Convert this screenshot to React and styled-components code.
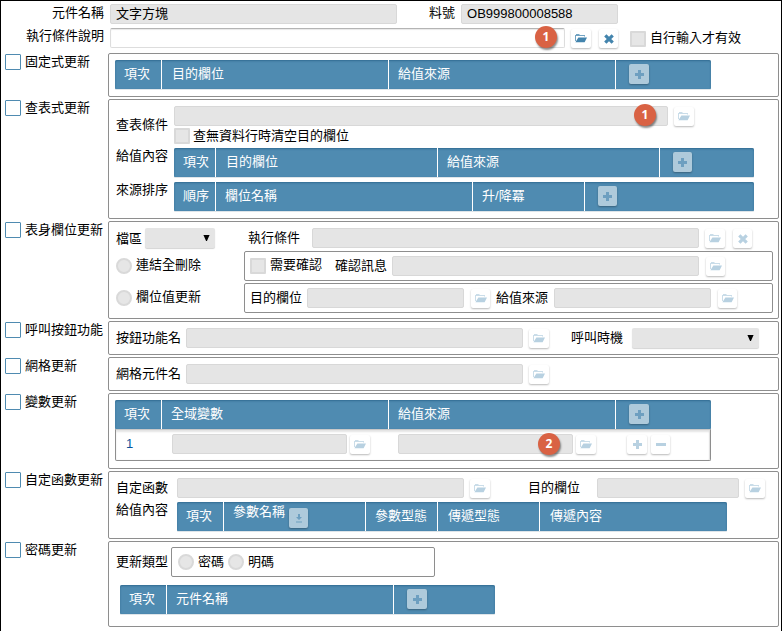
import React from "react";
import styled, { createGlobalStyle, css } from "styled-components";

const BLUE = "#4f8bb1";

const GlobalStyle = createGlobalStyle`
  * { box-sizing: border-box; }
  body { margin: 0; background: #fff; overflow: hidden; }
`;

const place = css`
  flex: none;
  margin-left: ${(p) => p.$ml || 0}px;
  margin-top: ${(p) => p.$mt || 0}px;
`;

const Page = styled.div`
  width: 782px;
  height: 631px;
  border: 1px solid #000;
  border-bottom: 0;
  color: #000;
  font: 13px/20px "Liberation Sans", "Noto Sans CJK TC", sans-serif;
  overflow: hidden;
`;

const Top = styled.div`
  height: 52px;
  padding-top: 3px;
`;

const Row = styled.div`
  display: flex;
  align-items: flex-start;
  height: ${(p) => p.$h}px;
  ${place}
`;

const Sections = styled.div`
  display: flex;
  flex-direction: column;
  gap: 2px;
`;

const Section = styled.section`
  display: grid;
  grid-template-columns: 103px 671px;
  padding-left: 4px;
`;

const SectionTitle = styled.label`
  display: flex;
  gap: 4px;
  height: 20px;
  padding-top: 1px;
  line-height: 16px;
  white-space: nowrap;
`;

const Panel = styled.div`
  height: ${(p) => p.$h}px;
  border: 1px solid #8e8e8e;
  border-radius: 2px;
`;

const Text = styled.span`
  ${place}
  height: 20px;
  line-height: 20px;
  white-space: nowrap;
`;

const Check = styled.span`
  ${place}
  width: 16px;
  height: 16px;
  border-radius: 1px;
  border: ${(p) => (p.$active ? `1px solid ${BLUE}` : "2px solid #d9d9d9")};
  background: ${(p) => (p.$active ? "#fff" : "#e6e6e6")};
`;

const Radio = styled(Check)`
  border-radius: 50%;
`;

const Field = styled.div`
  ${place}
  position: relative;
  width: ${(p) => p.$w}px;
  height: 20px;
  padding-left: 5px;
  line-height: 18px;
  border: 1px solid #d8d8d8;
  border-radius: 2px;
  background: #e5e5e5;
  ${(p) =>
    p.$open &&
    css`
      background: #fff;
      border-color: #b4b4b4 #ddd #ddd;
      box-shadow: inset 0 1px 1px #e8e8e8;
    `}
`;

const SelectBox = styled.div`
  ${place}
  display: flex;
  align-items: center;
  justify-content: flex-end;
  width: ${(p) => p.$w}px;
  height: 20px;
  padding: 0 5px 1px 0;
  border-radius: 2px;
  background: #e5e5e5;
  box-shadow: 0 1px 1px #d4d4d4;
`;

const Badge = styled.span`
  position: absolute;
  right: ${(p) => p.$right}px;
  top: ${(p) => p.$top}px;
  width: 22px;
  height: 22px;
  border-radius: 50%;
  background: #d96244;
  color: #fff;
  font: bold 12px/22px "Open Sans", sans-serif;
  text-align: center;
  box-shadow: 1px 2px 2px rgba(0, 0, 0, 0.45);
`;

const Button = styled.span`
  ${place}
  display: flex;
  align-items: center;
  justify-content: center;
  width: ${(p) => p.$w || 20}px;
  height: 19px;
  border-radius: 2px;
  background: #fff;
  color: ${(p) => (p.$active ? "#4384ad" : "#b8d1e1")};
  box-shadow: 0 1px 2px rgba(0, 0, 0, 0.28);
`;

const HeadButton = styled(Button)`
  height: 20px;
  background: #aecadb;
  color: #6d9fc0;
  box-shadow: 0 1px 2px rgba(0, 0, 0, 0.3);
`;

const TableHead = styled.div`
  ${place}
  display: flex;
  width: ${(p) => p.$w}px;
  height: 29px;
  border-radius: 2px 2px 1px 1px;
  background: ${BLUE};
  color: #fff;
  box-shadow: inset 0 1px 2px #326c91, 0 1px 0 #dfe5e9;
`;

const Cell = styled.div`
  display: flex;
  flex: none;
  width: ${(p) => p.$w}px;
  padding: 4px 0 0 ${(p) => p.$pl}px;
  border-right: 1px solid #fff;
  &:last-child { border-right: 0; }
`;

const Group = styled.div`
  ${place}
  display: flex;
  width: ${(p) => p.$w}px;
  height: 30px;
  border: 1px solid #8e8e8e;
  border-radius: 2px;
`;

const Record = styled.div`
  display: flex;
  width: 596px;
  height: 32px;
  margin-left: 6px;
  border: 1px solid #8e8e8e;
  border-top: 1px solid #c9c9c9;
  border-radius: 0 0 2px 2px;
  box-shadow: inset -1px 0 1px #ddd, inset 0 2px 2px #e4e4e4;
`;

const Index = styled(Text)`
  width: 8px;
  color: #07529b;
`;

const Stack = styled.div`
  display: flex;
  flex-direction: column;
`;

const FolderIcon = () => (
  <svg width="12" height="9" viewBox="0 0 12 9">
    <path d="M0 7V1h1V0h3.5v1H10v1.6H9V2H1v5z" fill="currentColor" opacity="0.75" />
    <path d="M3.4 3.5H12L9.6 8.2H.4z" fill="currentColor" />
  </svg>
);
const CrossIcon = () => (
  <svg width="10" height="10" viewBox="0 0 10 10">
    <path d="M1.3 1.3l7.4 7.4M8.7 1.3L1.3 8.7" stroke="currentColor" strokeWidth="3.2" />
  </svg>
);
const PlusIcon = () => (
  <svg width="9" height="9" viewBox="0 0 9 9">
    <path d="M0 4.5h9M4.5 0v9" stroke="currentColor" strokeWidth="3" />
  </svg>
);
const MinusIcon = () => (
  <svg width="10" height="3" viewBox="0 0 10 3">
    <path d="M0 1.5h10" stroke="currentColor" strokeWidth="3" />
  </svg>
);
const DownIcon = () => (
  <svg width="8" height="10" viewBox="0 0 8 10">
    <path d="M3 1h2v3h2L4 7 1 4h2zM1 8.4h6v1H1z" fill="currentColor" />
  </svg>
);
const ArrowIcon = () => (
  <svg width="7" height="6" viewBox="0 0 7 6">
    <path d="M.4 0h6.2L3.9 6h-.8z" fill="#000" />
  </svg>
);

const Folder = ({ ml = 6, mt = 1, w = 20, active }) => (
  <Button $ml={ml} $mt={mt} $w={w} $active={active}><FolderIcon /></Button>
);
const AddButton = ({ w = 20 }) => <HeadButton $w={w}><PlusIcon /></HeadButton>;
const Select = ({ ml, mt, w }) => (
  <SelectBox $ml={ml} $mt={mt} $w={w}><ArrowIcon /></SelectBox>
);
const FormSection = ({ title, h, children }) => (
  <Section>
    <SectionTitle><Check $active />{title}</SectionTitle>
    <Panel $h={h}>{children}</Panel>
  </Section>
);
const Head = ({ ml, mt, w, cells }) => (
  <TableHead $ml={ml} $mt={mt} $w={w}>
    {cells.map(([width, pad, content], i) => (
      <Cell key={i} $w={width} $pl={pad}>
        {typeof content === "string" ? <Text>{content}</Text> : content}
      </Cell>
    ))}
  </TableHead>
);

export default function App() {
  return (
    <>
      <GlobalStyle />
      <Page>
        <Top>
          <Row $h={24}>
            <Text $ml={51} $mt={-1}>元件名稱</Text>
            <Field $ml={6} $w={287}>文字方塊</Field>
            <Text $ml={32} $mt={-1}>料號</Text>
            <Field $ml={6} $w={157}>OB999800008588</Field>
          </Row>
          <Row $h={24}>
            <Text $ml={25} $mt={-2}>執行條件說明</Text>
            <Field $ml={6} $w={455} $open><Badge $right={7} $top={-3}>1</Badge></Field>
            <Folder active />
            <Button $ml={8} $mt={1} $w={19} $active><CrossIcon /></Button>
            <Check $ml={12} $mt={3} />
            <Text $ml={4}>自行輸入才有效</Text>
          </Row>
        </Top>
        <Sections>
          <FormSection title="固定式更新" h={44}>
            <Head ml={6} mt={6} w={596} cells={[
              [47, 9, "項次"], [227, 10, "目的欄位"], [227, 9, "給值來源"], [95, 13, <AddButton />],
            ]} />
          </FormSection>
          <FormSection title="查表式更新" h={120}>
            <Row $h={42} $mt={6}>
              <Text $ml={7} $mt={9}>查表條件</Text>
              <Stack>
                <Row $h={22}>
                  <Field $ml={6} $w={494}><Badge $right={11} $top={-3}>1</Badge></Field>
                  <Folder />
                </Row>
                <Row $h={20}>
                  <Check $ml={6} />
                  <Text $ml={3} $mt={-2}>查無資料行時清空目的欄位</Text>
                </Row>
              </Stack>
            </Row>
            <Row $h={34}>
              <Text $ml={7} $mt={-2}>給值內容</Text>
              <Head ml={6} w={580} cells={[
                [42, 9, "項次"], [222, 10, "目的欄位"], [222, 9, "給值來源"], [94, 13, <AddButton w={19} />],
              ]} />
            </Row>
            <Row $h={30}>
              <Text $ml={7} $mt={-2}>來源排序</Text>
              <Head ml={6} w={580} cells={[
                [42, 9, "順序"], [257, 9, "欄位名稱"], [112, 9, "升/降冪"], [169, 13, <AddButton w={19} />],
              ]} />
            </Row>
          </FormSection>
          <FormSection title="表身欄位更新" h={98}>
            <Row $h={23} $mt={6}>
              <Text $ml={7} $mt={1}>檔區</Text>
              <Select ml={3} w={70} />
              <Text $ml={33}>執行條件</Text>
              <Field $ml={12} $w={387} />
              <Folder />
              <Button $ml={8} $mt={1} $w={19}><CrossIcon /></Button>
            </Row>
            <Row $h={32}>
              <Radio $ml={7} $mt={7} />
              <Text $ml={4} $mt={4}>連結全刪除</Text>
              <Group $ml={43} $w={529}>
                <Check $ml={5} $mt={6} />
                <Text $ml={4} $mt={3}>需要確認</Text>
                <Text $ml={13} $mt={4}>確認訊息</Text>
                <Field $ml={5} $mt={4} $w={307} />
                <Folder ml={7} mt={5} w={19} />
              </Group>
            </Row>
            <Row $h={30}>
              <Radio $ml={7} $mt={7} />
              <Text $ml={4} $mt={4}>欄位值更新</Text>
              <Group $ml={43} $w={529}>
                <Text $ml={5} $mt={4}>目的欄位</Text>
                <Field $ml={5} $mt={4} $w={157} />
                <Folder ml={7} mt={5} w={19} />
                <Text $ml={6} $mt={4}>給值來源</Text>
                <Field $ml={6} $mt={4} $w={157} />
                <Folder ml={7} mt={5} w={19} />
              </Group>
            </Row>
          </FormSection>
          <FormSection title="呼叫按鈕功能" h={34}>
            <Row $h={24} $mt={6}>
              <Text $ml={7}>按鈕功能名</Text>
              <Field $ml={5} $w={337} />
              <Folder />
              <Text $ml={22}>呼叫時機</Text>
              <Select ml={9} w={127} />
            </Row>
          </FormSection>
          <FormSection title="網格更新" h={34}>
            <Row $h={24} $mt={6}>
              <Text $ml={7}>網格元件名</Text>
              <Field $ml={5} $w={337} />
              <Folder />
            </Row>
          </FormSection>
          <FormSection title="變數更新" h={76}>
            <Head ml={6} mt={6} w={596} cells={[
              [47, 9, "項次"], [227, 9, "全域變數"], [227, 9, "給值來源"], [95, 13, <AddButton />],
            ]} />
            <Record>
              <Index $ml={10} $mt={4}>1</Index>
              <Field $ml={38} $mt={4} $w={175} />
              <Folder ml={3} mt={5} />
              <Field $ml={28} $mt={4} $w={175}><Badge $right={12} $top={-2}>2</Badge></Field>
              <Folder ml={3} mt={5} />
              <Button $ml={31} $mt={5}><PlusIcon /></Button>
              <Button $ml={4} $mt={5} $w={19}><MinusIcon /></Button>
            </Record>
          </FormSection>
          <FormSection title="自定函數更新" h={68}>
            <Row $h={24} $mt={6}>
              <Text $ml={7}>自定函數</Text>
              <Field $ml={9} $w={287} />
              <Folder />
              <Text $ml={38}>目的欄位</Text>
              <Field $ml={17} $w={142} />
              <Folder />
            </Row>
            <Row $h={30}>
              <Text $ml={7} $mt={-2}>給值內容</Text>
              <Head ml={9} w={550} cells={[
                [47, 9, "項次"],
                [142, 9, <><Text $mt={-4}>參數名稱</Text><HeadButton $ml={4} $mt={2} $w={19}><DownIcon /></HeadButton></>],
                [72, 9, "參數型態"], [102, 10, "傳遞型態"], [187, 10, "傳遞內容"],
              ]} />
            </Row>
          </FormSection>
          <FormSection title="密碼更新" h={86}>
            <Row $h={30} $mt={5}>
              <Text $ml={7} $mt={5}>更新類型</Text>
              <Group $ml={3} $w={264}>
                <Radio $ml={6} $mt={6} />
                <Text $ml={4} $mt={4}>密碼</Text>
                <Radio $ml={4} $mt={6} />
                <Text $ml={4} $mt={4}>明碼</Text>
              </Group>
            </Row>
            <Head ml={11} mt={8} w={375} cells={[
              [47, 9, "項次"], [227, 9, "元件名稱"], [101, 13, <AddButton />],
            ]} />
          </FormSection>
        </Sections>
      </Page>
    </>
  );
}
